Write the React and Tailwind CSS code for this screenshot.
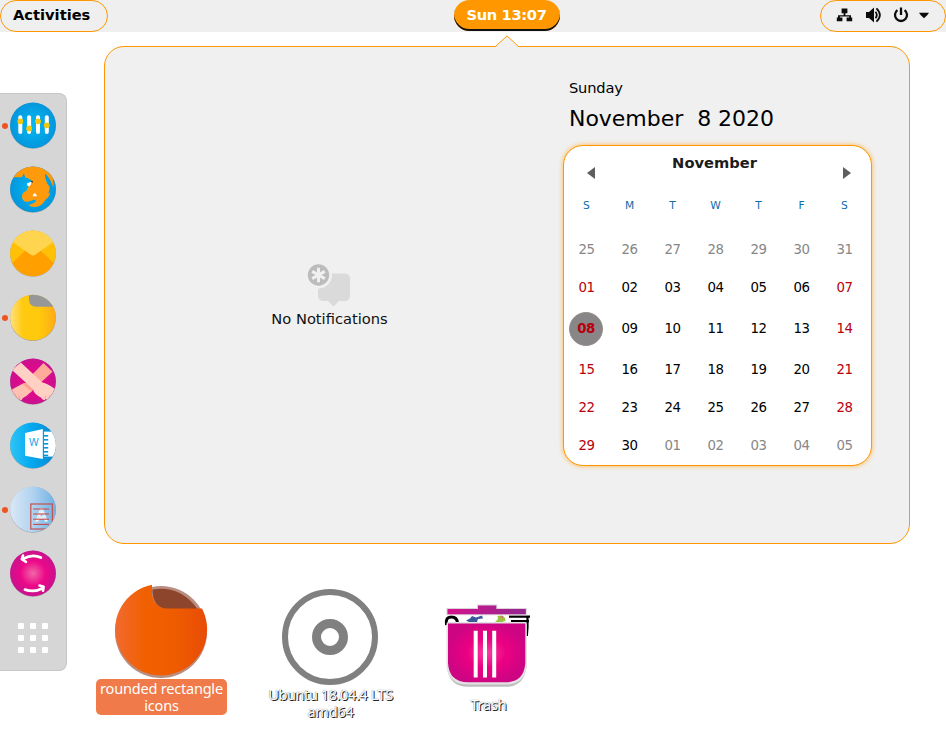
import React from "react";

const SANS = "font-['DejaVu_Sans',sans-serif]";

function Disc({ id, children, fill, cy = 24.3 }) {
  return (
    <svg className="block h-12 w-12 shrink-0" viewBox="0 0 48 48">
      <defs>
        <clipPath id={id + "-clip"}>
          <circle cx="24" cy={cy} r="22.9" />
        </clipPath>
      </defs>
      <circle cx="24" cy={cy + 0.5} r="23" fill="#000" opacity=".25" />
      <circle cx="24" cy={cy} r="22.9" fill={fill} />
      <g clipPath={`url(#${id}-clip)`}>{children}</g>
    </svg>
  );
}

function Gradients() {
  return (
    <svg className="absolute h-0 w-0">
      <defs>
        <radialGradient id="blue">
          <stop offset="0" stopColor="#03baf4" />
          <stop offset="1" stopColor="#0496dc" />
        </radialGradient>
        <linearGradient id="yellow">
          <stop offset="0" stopColor="#ffe082" />
          <stop offset=".28" stopColor="#ffca10" />
          <stop offset=".65" stopColor="#ffc80c" />
          <stop offset="1" stopColor="#ffab16" />
        </linearGradient>
        <radialGradient id="magenta">
          <stop offset="0" stopColor="#f50088" />
          <stop offset="1" stopColor="#c9128e" />
        </radialGradient>
        <linearGradient id="sky">
          <stop offset="0" stopColor="#2fc5f5" />
          <stop offset=".45" stopColor="#05a9f0" />
          <stop offset="1" stopColor="#0588d1" />
        </linearGradient>
        <linearGradient id="pale">
          <stop offset="0" stopColor="#dbe8f6" />
          <stop offset=".5" stopColor="#b0d2ef" />
          <stop offset="1" stopColor="#6fb0e3" />
        </linearGradient>
        <radialGradient id="pink">
          <stop offset="0" stopColor="#f266a8" />
          <stop offset=".55" stopColor="#ec0888" />
          <stop offset="1" stopColor="#c9128e" />
        </radialGradient>
        <linearGradient id="orange">
          <stop offset="0" stopColor="#f26a30" />
          <stop offset=".32" stopColor="#f06000" />
          <stop offset=".65" stopColor="#ef5c00" />
          <stop offset="1" stopColor="#e84c06" />
        </linearGradient>
        <radialGradient id="bin">
          <stop offset="0" stopColor="#f8409f" />
          <stop offset=".5" stopColor="#ec0082" />
          <stop offset="1" stopColor="#ce0583" />
        </radialGradient>
        <linearGradient id="lid">
          <stop offset="0" stopColor="#d5128c" />
          <stop offset="1" stopColor="#93278f" />
        </linearGradient>
      </defs>
    </svg>
  );
}

function MixerIcon() {
  const bars = [[11.3, 20.3], [20.1, 27.4], [29, 20.3], [37.8, 24.3]];
  return (
    <Disc id="mixer" fill="url(#blue)">
      {bars.map(([x, y]) => (
        <g key={x}>
          <rect x={x - 2} y="14.3" width="4" height="18.8" rx="2" fill="#fff" />
          <circle cx={x} cy={y} r="2.9" fill="#f6c60d" />
        </g>
      ))}
    </Disc>
  );
}

function FirefoxIcon() {
  return (
    <Disc id="fox" fill="url(#blue)">
      <path
        fill="#ff9a0c"
        d="M2 12.3H13L14.8 8.3 16.3 12.6C19 13 21 14.3 23 16.2L22.6 18.5 19.3 21.7 17.3 26C14.5 27 13 28.3 13 31.5 13 34.5 15 36.8 18.3 36.8 21 36.8 22.5 35 25 34.8 27.2 34.6 27.6 36.3 25.6 37.4 23.8 38.5 22 39.6 19.5 39.8 21 41.3 22.5 42 25 42 30 42 34 39.5 36.5 34.5 38.5 33.6 40.5 31 41.3 27.5L39.2 28.6C40.2 26 40.8 23.6 40.5 21.5 37.5 18.5 35.8 13.5 36 8.5 39.5 11.5 42 15.5 44.3 22.5 44.8 19 44.5 16.5 43.5 13.5L48 20V0H2Z"
      />
      <path fill="#fff" d="M17.8 18.4 22.8 16.6C22.6 19.4 21 20.6 20.3 21.6L18.6 20.8ZM23.8 31.2C23.8 29.5 24.8 28.6 25.6 28.3 27 29 27.8 30 27.8 31.2Z" />
      <path fill="#333" d="M21 15.4 24 16 23.4 18Z" />
    </Disc>
  );
}

function MailIcon() {
  return (
    <Disc id="mail" fill="#ffc107">
      <path fill="#ffa000" d="M0 37.2 15.8 22H32.2L48 37.2V48H0Z" />
      <path fill="#ffd54f" d="M0 10.2 21.8 25.8Q24 27.4 26.2 25.8L48 10.2V0H0Z" />
    </Disc>
  );
}

function FilesIcon() {
  return (
    <Disc id="files" fill="url(#yellow)" cy={24.6}>
      <path fill="#979797" d="M20 0V6.5Q20.3 13.6 27.5 13.8H48V0Z" />
    </Disc>
  );
}

function ArmsIcon() {
  return (
    <Disc id="arms" fill="url(#magenta)">
      <path fill="#ffab9b" d="M34.5 6 43.5 14.8 27 30 17 24Z" />
      <path
        fill="#ffc0b1"
        d="M13 27C18 24.6 23 27 24.6 31.6 23 35 20 36.5 18 38.5L13.6 41.2C12.5 44.4 10.3 43.3 10.2 42 8 43.4 6.6 42 6.4 40.4 4 41.4 2.8 40 2.6 38 .6 38 .4 35.5 1 33.5Z"
      />
      <path fill="#ffa190" d="M13.5 26.8C18 24.6 23 27 24.6 31.6L22.5 34.8Z" />
      <path fill="#ffd0c4" d="M3 13 11.8 5.5 33 25.2C38 26.8 43.5 29.5 47.4 33.2V37C46.6 39 45.7 39.8 44.7 38.8 45 41.5 42.5 42.5 41.2 41 40.6 43.5 37.6 43.6 36.8 41.8 35.6 44 33 43 32.4 40.8 28 38.6 24.6 35.5 24 32.2Z" />
      <path stroke="#f39a88" strokeWidth=".8" fill="none" d="M6 37 7.4 40.4M9.6 38.5 10.8 41.8M41 38 40.2 41.2M37 38.6 36 41.8M44 36 44.6 39" />
    </Disc>
  );
}

function WordIcon() {
  return (
    <Disc id="word" fill="url(#sky)">
      <rect x="35" y="10.6" width="14" height="25" fill="#fff" />
      {[14, 18, 22, 26, 30, 33.6].map((y) => (
        <rect key={y} x="34" y={y} width="5.2" height="1.6" fill="#0596dd" />
      ))}
      <path fill="#fff" d="M16 12 33.8 8V38L16 34.8Z" />
      <text x="24.9" y="25" textAnchor="middle" fontSize="10.5" fontFamily="'Open Sans', sans-serif" fill="#0aa2ea">W</text>
    </Disc>
  );
}

function ViewerIcon() {
  return (
    <Disc id="viewer" fill="url(#pale)">
      <text x="32.5" y="36.3" textAnchor="middle" fontSize="16.5" fontFamily="'DejaVu Sans', sans-serif" fill="#b7d6ef" stroke="#fff" strokeWidth=".8">A</text>
      <rect x="21.8" y="19" width="21.6" height="25" fill="none" stroke="#c5524f" strokeWidth="1.2" />
      <path d="M24.2 24H40M24.2 29H40M24.2 34.2H40M24.2 39.4H40" stroke="#c9403c" strokeWidth="1" />
    </Disc>
  );
}

function SyncIcon() {
  return (
    <Disc id="sync" fill="url(#pink)" cy={24.3}>
      <g fill="none" stroke="#fff" strokeWidth="2.8" strokeLinecap="round" strokeLinejoin="round">
        <path d="M31.8 8.6Q23.5 4.8 14.3 9.7" />
        <path d="M17 12.8 12.8 10.2 14 6.6" strokeWidth="2.6" />
        <path d="M16 40.6Q25 43.8 33.6 39.2" />
        <path d="M30.5 36.6 34.6 37.8 34 41.8" strokeWidth="2.6" />
      </g>
    </Disc>
  );
}

const apps = [
  [MixerIcon, true],
  [FirefoxIcon, false],
  [MailIcon, false],
  [FilesIcon, true],
  [ArmsIcon, false],
  [WordIcon, false],
  [ViewerIcon, true],
  [SyncIcon, false],
];

function Dock() {
  return (
    <nav className="mt-[61px] flex h-[578px] w-[67px] shrink-0 flex-col gap-4 rounded-r-lg border border-l-0 border-[#c6c6c6] bg-[#d6d6d6] pt-[7px]">
      {apps.map(([Icon, running], i) => (
        <div key={i} className="flex h-12 items-center">
          <span className={"ml-[2px] mr-[1px] mt-px h-[6px] w-[6px] shrink-0 rounded-full " + (running ? "bg-[#ee5423]" : "")} />
          <Icon />
        </div>
      ))}
      <div className="ml-[18px] mt-[10px] grid w-[30px] grid-cols-3 gap-[6px]">
        {Array.from({ length: 9 }, (_, i) => (
          <span key={i} className="h-[6px] w-[6px] rounded-[1px] bg-white" />
        ))}
      </div>
    </nav>
  );
}

function TopBar() {
  return (
    <header className="flex h-8 items-center bg-[#efefef] text-[14.67px] font-bold">
      <div className="flex h-8 w-[108px] items-center rounded-full border border-[#ff9800] pb-[2px] pl-3">Activities</div>
      <div className="ml-[346px] flex h-[31px] w-[106px] items-center justify-center self-start rounded-full bg-[#ff9800] pb-[1px] pr-[1px] text-[14.67px] tracking-[-0.35px] text-white shadow-[inset_0_-2px_0_#111]">
        Sun 13:07
      </div>
      <div className="ml-[260px] flex h-8 w-[126px] items-center rounded-full border border-[#ff9800]">
        <svg className="block h-[30px] w-[124px]" viewBox="821 1 124 30" fill="#0b0b0b">
          <path d="M841.6 8.6h5.8v4.6h-2v2h5.6v2.4h1.2v3.6h-5.6v-3.6h2.6v-1h-9.4v1h2.6v3.6h-5.6v-3.6h1.2v-2.4h5.6v-2h-2z" />
          <path d="M866 12h3l5-4.5v15L869 18h-3z" />
          <g fill="none" stroke="#0b0b0b">
            <path d="M875.5 11.8q2.6 3.2 0 6.4" strokeWidth="1.8" />
            <path d="M876.4 8.3q7 6.7 0 13.4" strokeWidth="1.8" />
            <path d="M897.4 10.2a6 6 0 1 0 7.2 0M901 7.6v7.4" strokeWidth="2.3" />
          </g>
          <path d="M919 12.8h10q-1 2.2-5 5.4-4-3.2-5-5.4z" />
        </svg>
      </div>
    </header>
  );
}

const weeks = [
  ["25", "26", "27", "28", "29", "30", "31"],
  ["01", "02", "03", "04", "05", "06", "07"],
  ["08", "09", "10", "11", "12", "13", "14"],
  ["15", "16", "17", "18", "19", "20", "21"],
  ["22", "23", "24", "25", "26", "27", "28"],
  ["29", "30", "01", "02", "03", "04", "05"],
];

function dayColor(row, col) {
  if (row === 0 || (row === 5 && col > 1)) return "text-[#878787]";
  return col === 0 || col === 6 ? "text-[#b8000e]" : "text-black";
}

function Calendar() {
  return (
    <div className="mt-[12px] h-[321px] w-[309px] rounded-[20px] border border-[#ff9800] bg-white shadow-[0_0_5px_#ffb54d]">
      <div className="flex h-[50px] justify-between pl-[23px] pr-[20px] pt-[7px] text-[14.67px] font-bold leading-5 text-[#1c1c1c]">
        <svg className="mt-[14px] block h-3 w-2" viewBox="0 0 8 12"><path d="M8 0v12L0 6z" fill="#5e5e5e" /></svg>
        <span className="ml-[-9px]">November</span>
        <svg className="mt-[14px] block h-3 w-2" viewBox="0 0 8 12"><path d="M0 0v12l8-6z" fill="#5e5e5e" /></svg>
      </div>
      <div className="ml-px grid w-[301px] grid-cols-7 text-center text-[10.67px] leading-5 text-[#0f6cab]">
        {["S", "M", "T", "W", "T", "F", "S"].map((d, i) => <span key={i}>{d}</span>)}
      </div>
      <div className="ml-px mt-[15px] text-[13.33px] tracking-[-0.4px]">
        {weeks.map((week, r) => (
          <div key={r} className={"grid w-[301px] grid-cols-7 items-center justify-items-center " + (r === 2 ? "h-11" : "h-[38px]")}>
            {week.map((d, c) =>
              r === 2 && c === 0 ? (
                <span key={c} className="ml-[-1px] flex h-[34px] w-[34px] items-center justify-center rounded-full border border-[#96908c] bg-[#888686] font-bold text-[#b8000e]">{d}</span>
              ) : (
                <span key={c} className={dayColor(r, c)}>{d}</span>
              )
            )}
          </div>
        ))}
      </div>
    </div>
  );
}

function Panel() {
  return (
    <section className="relative ml-[37px] mt-[14px] flex h-[498px] w-[806px] rounded-[20px] border border-[#ff9800] bg-[#f0f0f0]">
      <svg className="absolute left-[389px] top-[-12px] h-[13px] w-[26px]" viewBox="0 0 26 13">
        <path d="M1 12.5 13 1 25 12.5V13H1z" fill="#f0f0f0" />
        <path d="M.5 11.5H1.5L13 .9 24.5 11.5H25.5" fill="none" stroke="#ff9800" />
      </svg>
      <div className="flex w-[449px] flex-col items-center pt-[216px]">
        <svg className="mr-[2px] block h-11 w-[44px]" viewBox="0 0 44 44">
          <path fill="#dadada" d="M15 10.5H37.5Q43 10.5 43 16V32Q43 38 37.5 38H32L26.5 43.5 21 38H16.5Q11 38 11 32V15Z" />
          <circle cx="11.5" cy="12" r="13.5" fill="#f0f0f0" />
          <circle cx="11.5" cy="12" r="10.7" fill="#bcbcbc" />
          <path stroke="#f0f0f0" strokeWidth="3" d="M11.5 4.7V19.3M5.2 8.4 17.8 15.6M17.8 8.4 5.2 15.6" />
        </svg>
        <p className="mt-[2px] text-[14.67px] leading-5 text-[#111]">No Notifications</p>
      </div>
      <div className="ml-[9px] pt-[31px]">
        <p className="ml-[6px] text-[14.67px] leading-5 tracking-[-0.2px]">Sunday</p>
        <p className="ml-[6px] mt-[7px] whitespace-pre text-[22px] leading-7 tracking-[-0.03px]">November  8 2020</p>
        <Calendar />
      </div>
    </section>
  );
}

const labelFont = "font-['Noto_Sans',sans-serif] whitespace-nowrap text-center text-[14.5px] leading-[17px] tracking-[-0.2px] text-white";
const darkEdge = " [text-shadow:1px_1px_0_#222,0_0_1px_#555]";

function Desktop() {
  return (
    <div className="flex pl-[29px] pt-[39px]">
      <div className="w-[131px]">
        <svg className="block h-24 w-[131px]" viewBox="96 583 131 96">
          <circle cx="161" cy="632" r="46" fill="#b98d80" />
          <path fill="#8d452b" d="M152.5 589.5Q180 585 197.5 609H165Q152.500 606 152.5 589.5Z" />
          <path fill="url(#orange)" d="M152 584.7V594Q153.5 607.5 167 608.6H202A46 45.8 0 1 1 152 584.7Z" />
        </svg>
        <p className={"h-9 rounded-[5px] bg-[#f07a49] pt-[1px] " + labelFont}>
          rounded rectangle<br />icons
        </p>
      </div>
      <div className="ml-[38px] w-[131px]">
        <svg className="block h-[103px] w-[131px]" viewBox="265 583 131 103">
          <g fill="none" stroke="#808080">
            <circle cx="330" cy="637" r="45" strokeWidth="6" />
            <circle cx="330" cy="637" r="13.5" strokeWidth="9" />
          </g>
        </svg>
        <p className={labelFont + darkEdge}><span className="tracking-[-0.4px]">Ubuntu 18.04.4 LTS</span><br />amd64</p>
      </div>
      <div className="ml-[27px] w-[131px]">
        <svg className="block h-[113px] w-[131px]" viewBox="423 583 131 113">
          <path d="M446.5 625Q445 617 451.5 617 457 617 457.5 623" fill="none" stroke="#000" strokeWidth="3" />
          <path d="M466 620.5 470 618.5 472 616 476 617.5 482 615.5 483 618.5 478 619 477 622H469Z" fill="#3b5998" />
          <path d="M495 622 498 619 497.5 616Q505 614 505.5 621L502 622Z" fill="#9bc53d" />
          <path d="M500 616.5 503 616.5 502.5 618.5Z" fill="#e58" />
          <path d="M509 616.7H530M511 621.2H529M527.5 617V627L526.8 636" fill="none" stroke="#000" strokeWidth="2.2" />
          <path d="M447 624H526.5V667Q524 686.8 506 686.8H468Q449 686.8 447 667Z" fill="#bdbdbd" />
          <path d="M446.5 624Q446.500 622 448.5 622H524.8Q526.8 622 526.8 624V664Q526 684.500 506 684.5H468Q447 684.5 446.5 664Z" fill="#e2e2e2" />
          <path d="M448 623.5H525.3V663Q524 682 506 682.3H468Q449 682 448 663Z" fill="url(#bin)" />
          <path d="M446.5 608H477V604.5H497.3V608H526.8V615.3H446.5Z" fill="#dcd2dc" />
          <path d="M447.5 609H478V605.5H496.3V609H525.8V614.2H447.5Z" fill="url(#lid)" />
          <path d="M475.7 630.7V677.4M485 630.7V677.4M494.2 630.7V677.4" stroke="#fff" strokeWidth="4" />
        </svg>
        <p className={labelFont + darkEdge}>Trash</p>
      </div>
    </div>
  );
}

export default function App() {
  return (
    <div className={"h-[732px] w-[946px] overflow-hidden bg-white text-black " + SANS}>
      <Gradients />
      <TopBar />
      <div className="flex h-[700px]">
        <Dock />
        <main className="w-[879px] shrink-0">
          <Panel />
          <Desktop />
        </main>
      </div>
    </div>
  );
}
